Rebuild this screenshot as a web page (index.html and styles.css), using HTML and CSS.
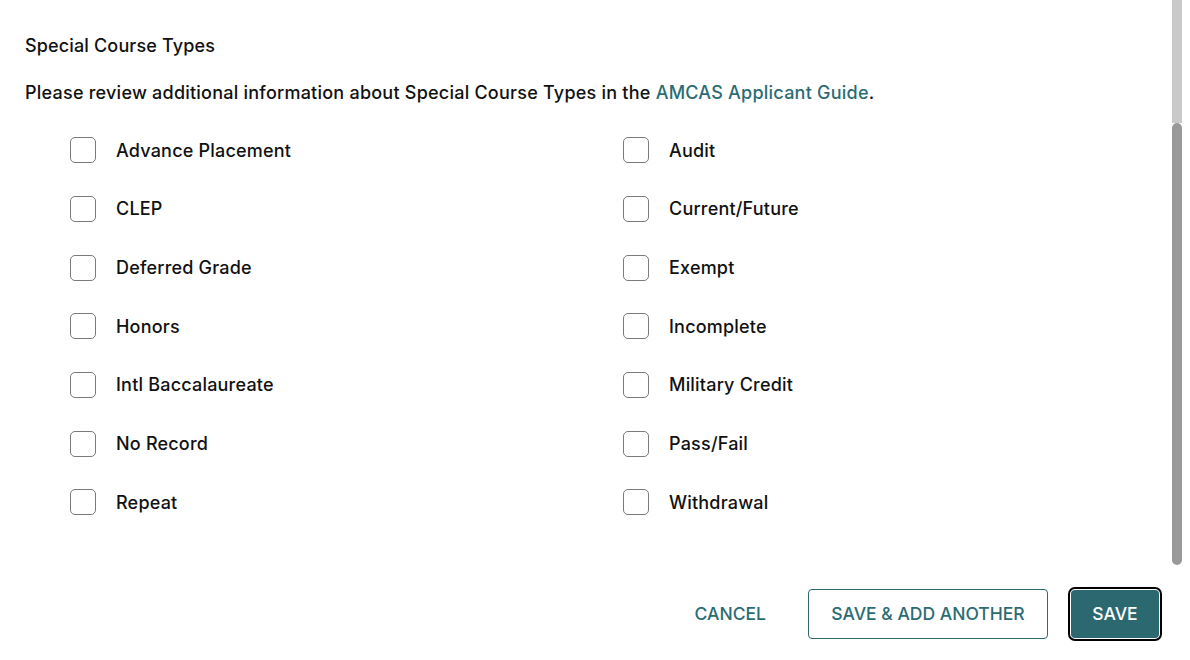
FILE: index.html
```html
<!DOCTYPE html>
<html>
<head>
<meta charset="utf-8">
<link rel="stylesheet" href="styles.css">
</head>
<body>
<div class="page">
  <main class="content">
    <h2 class="title">Special Course Types</h2>
    <p class="intro">Please review additional information about Special Course Types in the <a href="#" class="link">AMCAS Applicant Guide</a>.</p>
    <div class="grid">
      <label class="opt"><span class="box"></span><span>Advance Placement</span></label>
      <label class="opt"><span class="box"></span><span>Audit</span></label>
      <label class="opt"><span class="box"></span><span>CLEP</span></label>
      <label class="opt"><span class="box"></span><span>Current/Future</span></label>
      <label class="opt"><span class="box"></span><span>Deferred Grade</span></label>
      <label class="opt"><span class="box"></span><span>Exempt</span></label>
      <label class="opt"><span class="box"></span><span>Honors</span></label>
      <label class="opt"><span class="box"></span><span>Incomplete</span></label>
      <label class="opt"><span class="box"></span><span>Intl Baccalaureate</span></label>
      <label class="opt"><span class="box"></span><span>Military Credit</span></label>
      <label class="opt"><span class="box"></span><span>No Record</span></label>
      <label class="opt"><span class="box"></span><span>Pass/Fail</span></label>
      <label class="opt"><span class="box"></span><span>Repeat</span></label>
      <label class="opt"><span class="box"></span><span>Withdrawal</span></label>
    </div>
    <div class="actions">
      <button class="btn btn-text">CANCEL</button>
      <button class="btn btn-outline">SAVE &amp; ADD ANOTHER</button>
      <button class="btn btn-primary">SAVE</button>
    </div>
  </main>
  <div class="scrollbar">
    <div class="track"></div>
    <div class="thumb"></div>
  </div>
</div>
</body>
</html>
```
FILE: styles.css
```css
* { box-sizing: border-box; }
html, body { margin: 0; padding: 0; background: #fff; }
body {
  font-family: Inter, "Liberation Sans", sans-serif;
  color: #111;
  width: 1190px;
  height: 660px;
  overflow: hidden;
}
.page {
  display: flex;
  height: 660px;
}
.content {
  flex: 1;
  padding: 0 13px 0 25px;
}
.title {
  margin: 36px 0 0;
  font-size: 18px;
  font-weight: 500;
  line-height: 20px;
  letter-spacing: 0.15px;
}
.intro {
  margin: 27px 0 0;
  font-size: 18px;
  font-weight: 500;
  line-height: 20px;
  letter-spacing: 0.23px;
}
.link { color: #2b6c74; text-decoration: none; }
.grid {
  display: grid;
  grid-template-columns: 553px 1fr;
  grid-auto-rows: 58.67px;
  margin: 18px 0 0 45px;
}
.opt {
  display: flex;
  align-items: center;
  gap: 20px;
  font-size: 18px;
  font-weight: 500;
  letter-spacing: 0.2px;
}
.box {
  width: 26px;
  height: 26px;
  border: 1.5px solid #7a7a7a;
  border-radius: 5px;
  flex: none;
}
.actions {
  display: flex;
  justify-content: flex-end;
  align-items: center;
  margin-top: 57px;
}
.btn {
  font-family: inherit;
  font-size: 17.5px;
  font-weight: 500;
  letter-spacing: 0;
  color: #2b6c74;
  background: none;
  border: none;
  height: 50px;
  border-radius: 4px;
  white-space: nowrap;
  cursor: pointer;
  padding: 0;
}
.btn-text { padding: 0 16px; margin-right: 26px; }
.btn-outline {
  border: 1px solid #2b6c74;
  width: 240px;
  margin-right: 23px;
}
.btn-primary {
  background: #2c6870;
  color: #fff;
  width: 88px;
  height: 48px;
  outline: 2px solid #000;
  outline-offset: 1px;
  border-radius: 4px;
}
.scrollbar {
  width: 10px;
  margin: 0 8px 0 0;
  display: flex;
  flex-direction: column;
}
.track { height: 123px; background: #c9c9c9; }
.thumb { height: 442px; background: #999; border-radius: 5px; }
```
